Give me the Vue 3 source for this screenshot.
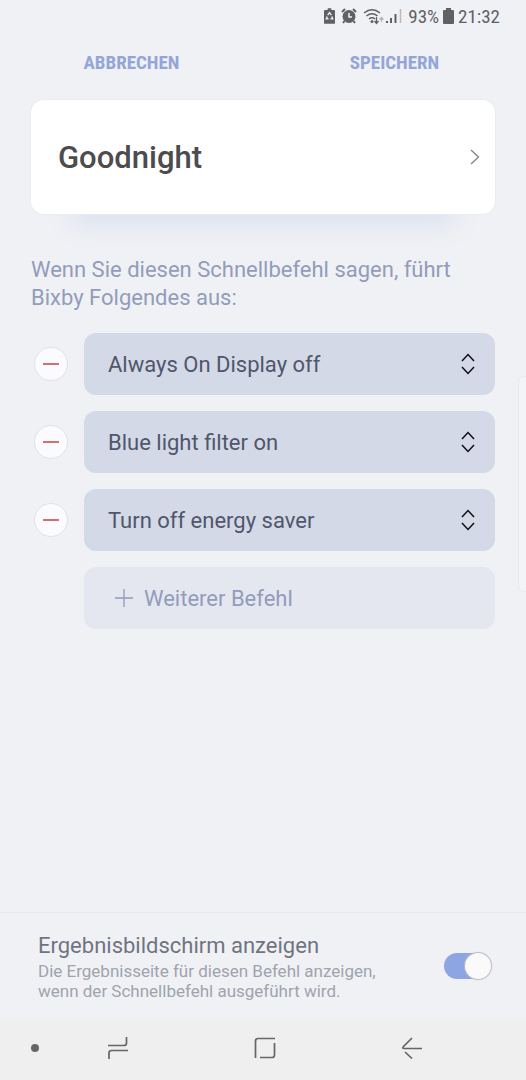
<script setup>
import { ref } from 'vue'

const commands = ref(['Always On Display off', 'Blue light filter on', 'Turn off energy saver'])
const showResult = ref(true)

function removeCommand(index) {
  commands.value.splice(index, 1)
}
</script>

<template>
  <div class="screen">
    <div class="status">
      <svg width="11" height="16" viewBox="0 0 12 17" aria-hidden="true">
        <path d="M4 0h4v2h3a1 1 0 0 1 1 1v13a1 1 0 0 1-1 1H1a1 1 0 0 1-1-1V3a1 1 0 0 1 1-1h3z" fill="#606164" />
        <path d="M4 7.500 6 4.800l2 2.700M8.500 9l1 2.700H7M5 11.700H2.500L3.500 9" fill="none" stroke="#f0f1f5" stroke-width="1.500" />
      </svg>
      <svg class="alarm" width="16" height="16" viewBox="0 0 16 16" aria-hidden="true">
        <circle cx="8" cy="8.500" r="6.500" fill="#606164" />
        <path d="M1 4 4 1M12 1l3 3M3.500 13 2 15M12.500 13l1.500 2" stroke="#606164" stroke-width="2" />
        <path d="M8 5v4h3" fill="none" stroke="#f0f1f5" stroke-width="1.500" />
      </svg>
      <svg class="wifi" width="21" height="17" viewBox="0 0 21 17" aria-hidden="true">
        <g fill="none" stroke="#606164" stroke-width="1.600">
          <path d="M1 5Q9 -1.500 17 5M3.500 8Q9 3.500 14.500 8M6 11q3-2.500 6 0" />
        </g>
        <circle cx="9" cy="13.500" r="1.500" fill="#606164" />
        <path d="M13.500 9v6M11.500 13l2 2.500 2-2.500" fill="none" stroke="#606164" stroke-width="1.300" />
        <path d="M18.500 14V9.500M16.500 11.500l2-2 2 2" fill="none" stroke="#b5b6ba" stroke-width="1.300" />
      </svg>
      <svg class="signal" width="16" height="16" viewBox="0 0 16 16" aria-hidden="true">
        <path d="M1 13v2M5 10v5M9.500 6v9" stroke="#606164" stroke-width="2" />
        <path d="M14.500 1v14" stroke="#b9babf" stroke-width="1.500" />
      </svg>
      <span class="percent">93%</span>
      <svg class="battery" width="11" height="16" viewBox="0 0 11 16" aria-hidden="true">
        <path d="M3 0h5v2h2a1 1 0 0 1 1 1v12a1 1 0 0 1-1 1H1a1 1 0 0 1-1-1V3a1 1 0 0 1 1-1h2z" fill="#606164" />
      </svg>
      <span class="time">21:32</span>
    </div>

    <header class="actions">
      <button type="button">ABBRECHEN</button>
      <button type="button">SPEICHERN</button>
    </header>

    <main class="content">
      <button type="button" class="phrase">
        <span>Goodnight</span>
        <svg width="10" height="16" viewBox="0 0 10 16" aria-hidden="true">
          <path d="M1 1l7.500 7L1 15" fill="none" stroke="#85868f" stroke-width="1.400" />
        </svg>
      </button>

      <p class="intro">Wenn Sie diesen Schnellbefehl sagen, führt Bixby Folgendes aus:</p>

      <ul class="commands">
        <li v-for="(command, index) in commands" :key="command">
          <button type="button" class="remove" :aria-label="command + ' entfernen'" @click="removeCommand(index)">
            <svg width="16" height="2" viewBox="0 0 16 2" aria-hidden="true">
              <path d="M0 1h16" stroke="#d26f72" stroke-width="2" />
            </svg>
          </button>
          <div class="command">
            <span>{{ command }}</span>
            <button type="button" class="sort" :aria-label="command + ' verschieben'">
              <svg width="14" height="22" viewBox="0 0 14 22" aria-hidden="true">
                <path d="M1 8l6-6.500L13 8M1 14l6 6.500 6-6.500" fill="none" stroke="#0d0f15" stroke-width="1.500" />
              </svg>
            </button>
          </div>
        </li>
      </ul>
      <button type="button" class="add">
        <svg width="20" height="20" viewBox="0 0 20 20" aria-hidden="true">
          <path d="M10 1v18M1 10h18" stroke="#929bb8" stroke-width="1.300" />
        </svg>
        <span>Weiterer Befehl</span>
      </button>
    </main>

    <label class="result" for="show-result">
      <span class="result-text">
        <span class="result-title">Ergebnisbildschirm anzeigen</span>
        <span class="result-note">Die Ergebnisseite für diesen Befehl anzeigen, wenn der Schnellbefehl ausgeführt wird.</span>
      </span>
      <input id="show-result" v-model="showResult" type="checkbox" class="switch" />
    </label>

    <nav class="navbar">
      <button type="button" aria-label="Leiste ausblenden">
        <svg width="8" height="8" viewBox="0 0 8 8"><circle cx="4" cy="4" r="4" fill="#666" /></svg>
      </button>
      <button type="button" aria-label="Letzte Apps">
        <svg width="22" height="24" viewBox="0 0 22 24">
          <path d="M1 9.500h16q2.500 0 2.500-2.500V1M21 14.500H4.500Q2 14.500 2 17v6" />
        </svg>
      </button>
      <button type="button" aria-label="Startbildschirm">
        <svg width="22" height="22" viewBox="0 0 22 22">
          <path d="M21 1.500H4Q1.500 1.500 1.500 4v17M20.500 6v12q0 2.500-2.500 2.500H6" />
        </svg>
      </button>
      <button type="button" aria-label="Zurück">
        <svg width="22" height="22" viewBox="0 0 22 22">
          <path d="M21 11.500H3q-2 0-.500-2L11 1M4 15l7 6.500" />
        </svg>
      </button>
    </nav>

    <div class="edge-handle"></div>
  </div>
</template>

<style>
body {
  background: #f0f1f5;
}
</style>

<style scoped>
.screen {
  position: relative;
  box-sizing: border-box;
  display: flex;
  flex-direction: column;
  min-height: 100vh;
  overflow: hidden;
  background: #f0f1f5;
  font-family: Roboto, "Liberation Sans", sans-serif;
}

button {
  padding: 0;
  border: 0;
  background: none;
  font-family: inherit;
  cursor: pointer;
}

svg {
  display: block;
  flex: none;
}

.status {
  display: flex;
  align-items: center;
  justify-content: flex-end;
  height: 32px;
  padding-right: 26px;
  color: #606164;
  font-family: "Roboto Condensed", Roboto, sans-serif;
  font-size: 19px;
}

.alarm {
  margin-left: 6px;
}

.wifi {
  margin-left: 6px;
}

.signal {
  margin-left: 2px;
}

.percent {
  margin-left: 6px;
}

.battery {
  margin: 0 4px;
}

.actions {
  display: grid;
  grid-template-columns: 1fr 1fr;
  height: 60px;
}

.actions button {
  color: #94a5d8;
  font-family: "Roboto Condensed", Roboto, sans-serif;
  font-size: 19px;
  font-weight: 700;
}

.content {
  flex: 1;
  padding: 8px 31px 24px;
}

.phrase {
  display: flex;
  align-items: center;
  justify-content: space-between;
  width: 100%;
  height: 114px;
  padding: 0 15px 0 27px;
  border-radius: 13px;
  background: #fff;
  box-shadow: 0 0 1px 1px #ebecf0, 0 50px 28px -40px #d9e0ef;
  color: #4c4c4e;
  font-size: 31px;
  font-weight: 500;
}

.intro {
  margin: 42px 0 21px;
  color: #939cba;
  font-size: 22px;
  line-height: 28px;
}

.commands {
  display: flex;
  flex-direction: column;
  gap: 16px;
  margin: 0 0 16px;
  padding: 0;
  list-style: none;
}

.commands li {
  display: flex;
  align-items: center;
  gap: 16px;
  padding-left: 3px;
}

.remove {
  display: flex;
  flex: none;
  align-items: center;
  justify-content: center;
  box-sizing: border-box;
  width: 34px;
  height: 34px;
  border: 1px solid #e1e2e7;
  border-radius: 50%;
  background: #fbfbfd;
}

.command {
  display: flex;
  flex: 1;
  align-items: center;
  justify-content: space-between;
  height: 62px;
  padding: 0 20px 0 24px;
  border-radius: 12px;
  background: #d3d9e7;
  color: #50566b;
  font-size: 22px;
}

.add {
  display: flex;
  align-items: center;
  gap: 10px;
  width: calc(100% - 53px);
  height: 62px;
  margin-left: 53px;
  padding: 0 30px;
  border-radius: 12px;
  background: #e4e7f0;
  color: #939cba;
  font-size: 22px;
}

.result {
  display: flex;
  align-items: center;
  justify-content: space-between;
  gap: 24px;
  box-sizing: border-box;
  min-height: 107px;
  padding: 0 35px 0 38px;
  border-top: 1px solid #e9eaef;
}

.result-text {
  display: flex;
  flex-direction: column;
  max-width: 360px;
}

.result-title {
  color: #70747f;
  font-size: 22px;
  line-height: 30px;
}

.result-note {
  color: #a0a3ad;
  font-size: 17px;
  line-height: 20px;
}

.switch {
  position: relative;
  flex: none;
  width: 47px;
  height: 26px;
  margin: 0;
  border-radius: 13px;
  background: #c4c7d0;
  appearance: none;
  cursor: pointer;
}

.switch:checked {
  background: #8ea5e3;
}

.switch::before {
  position: absolute;
  top: 0;
  left: 0;
  width: 26px;
  height: 26px;
  border-radius: 50%;
  background: #fafafa;
  box-shadow: 0 0 1px 1px #b9bbc2;
  content: "";
}

.switch:checked::before {
  right: 0;
  left: auto;
}

.navbar {
  display: grid;
  grid-template-columns: 18px 1fr 1fr 1fr;
  box-sizing: border-box;
  height: 61px;
  padding: 0 41px 3px 26px;
  background: #efefef;
}

.navbar button {
  display: flex;
  align-items: center;
  justify-content: center;
}

.navbar path {
  fill: none;
  stroke: #666;
  stroke-width: 1.7;
}

.edge-handle {
  position: absolute;
  top: 376px;
  right: -10px;
  width: 16px;
  height: 214px;
  border: 1px solid #e8e9ee;
  border-radius: 6px;
  background: #f3f4f8;
}
</style>
